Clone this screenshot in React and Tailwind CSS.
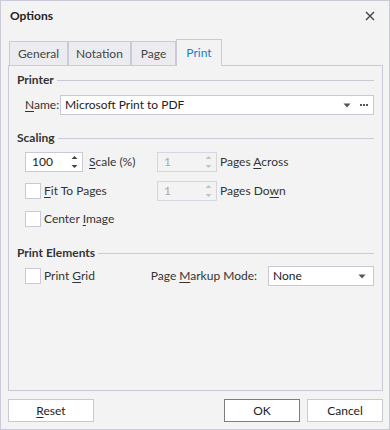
import React from "react";

function SpinArrows({ color }) {
  return (
    <svg width="7" height="14" viewBox="0 0 7 14" className="shrink-0">
      <path d="M0.5 4 L3.5 1 L6.5 4 Z" fill={color} />
      <path d="M0.5 10 L3.5 13 L6.5 10 Z" fill={color} />
    </svg>
  );
}

function Spin({ value, disabled, className }) {
  return (
    <div
      className={
        "h-[20px] flex items-center justify-between pl-[6px] pr-[4px] border " +
        (disabled
          ? "border-[#d6d6e0] bg-[#f3f3f3] text-[#a9a9a9] "
          : "border-[#c9c9d8] bg-white text-[#222] ") +
        className
      }
    >
      <span>{value}</span>
      <SpinArrows color={disabled ? "#c4c4c4" : "#444"} />
    </div>
  );
}

function Check() {
  return <div className="w-[16px] h-[16px] border border-[#c9c9d8] bg-white shrink-0" />;
}

function DownTri() {
  return (
    <svg width="8" height="5" viewBox="0 0 8 5" className="shrink-0">
      <path d="M0.5 0.5 L7.5 0.5 L4 4.5 Z" fill="#555" />
    </svg>
  );
}

function Dots() {
  return (
    <svg width="8" height="2" viewBox="0 0 8 2" className="shrink-0 ml-[9px]">
      <rect x="0" y="0" width="2" height="2" fill="#555" />
      <rect x="3" y="0" width="2" height="2" fill="#555" />
      <rect x="6" y="0" width="2" height="2" fill="#555" />
    </svg>
  );
}

function Header({ children, className = "" }) {
  return (
    <div className={"h-[16px] flex items-center pl-[8px] pr-[8px] " + className}>
      <span className="font-bold text-[#333]">{children}</span>
      <div className="flex-1 h-px bg-[#c9c9d8] ml-[3px]" />
    </div>
  );
}

export default function App() {
  return (
    <div className="w-[390px] h-[430px] bg-[#f3f3f3] border border-[#cacad8] flex flex-col font-['Lato','Liberation_Sans',sans-serif] text-[12px] leading-[16px] text-[#333]">
      {/* title bar */}
      <div className="h-[29px] shrink-0 flex items-center justify-between pl-[9px] pr-[14px]">
        <span className="font-bold text-[#222]">Options</span>
        <svg width="10" height="10" viewBox="0 0 10 10">
          <path d="M1 1 L9 9 M9 1 L1 9" stroke="#444" strokeWidth="1.4" />
        </svg>
      </div>

      {/* tabs */}
      <div className="mt-[9px] ml-[8px] h-[27px] -mb-px relative z-10 flex items-end">
        <div className="w-[59px] h-[25px] border border-[#c9c9d8] bg-[#ececf0] flex items-center justify-center text-[#444]">
          General
        </div>
        <div className="w-[63px] h-[25px] border border-[#c9c9d8] bg-[#ececf0] flex items-center justify-center text-[#444]">
          Notation
        </div>
        <div className="w-[45px] h-[25px] border border-[#c9c9d8] bg-[#ececf0] flex items-center justify-center text-[#444]">
          Page
        </div>
        <div className="w-[46px] h-[27px] border border-b-0 border-[#c9c9d8] bg-[#f3f3f3] flex items-center justify-center pb-[1px] text-[#1f7ad6]">
          Print
        </div>
      </div>

      {/* panel */}
      <div className="ml-[7px] w-[375px] h-[326px] shrink-0 border border-[#c9c9d8] bg-[#f3f3f3] flex flex-col">
        <Header className="mt-[6px]">Printer</Header>
        <div className="mt-[7px] h-[20px] flex items-center pl-[16px] pr-[8px]">
          <span className="w-[35px] shrink-0">
            <u className="underline-offset-2">N</u>ame:
          </span>
          <div className="flex-1 h-[20px] border border-[#c9c9d8] bg-white flex items-center pl-[4px] pr-[5px] text-[#222]">
            <span className="flex-1">Microsoft Print to PDF</span>
            <DownTri />
            <Dots />
          </div>
        </div>

        <Header className="mt-[15px]">Scaling</Header>
        <div className="mt-[6px] h-[20px] flex items-center pl-[16px]">
          <Spin value="100" className="w-[58px]" />
          <span className="ml-[6px]">
            <u className="underline-offset-2">S</u>cale (%)
          </span>
          <Spin value="1" disabled className="ml-auto w-[60px]" />
          <span className="ml-[3px] w-[162px]">
            Pages <u className="underline-offset-2">A</u>cross
          </span>
        </div>
        <div className="mt-[9px] h-[20px] flex items-center pl-[16px]">
          <Check />
          <span className="ml-[3px]">
            <u className="underline-offset-2">F</u>it To Pages
          </span>
          <Spin value="1" disabled className="ml-auto w-[60px]" />
          <span className="ml-[3px] w-[162px]">
            Pages Do<u className="underline-offset-2">w</u>n
          </span>
        </div>
        <div className="mt-[8px] h-[20px] flex items-center pl-[16px]">
          <Check />
          <span className="ml-[3px]">
            Center <u className="underline-offset-2">I</u>mage
          </span>
        </div>

        <Header className="mt-[16px]">Print Elements</Header>
        <div className="mt-[5px] h-[20px] flex items-center pl-[16px] pr-[8px]">
          <Check />
          <span className="ml-[3px]">
            Print <u className="underline-offset-2">G</u>rid
          </span>
          <span className="ml-auto">
            Page <u className="underline-offset-2">M</u>arkup Mode:
          </span>
          <div className="ml-[11px] w-[106px] h-[20px] border border-[#c9c9d8] bg-white flex items-center pl-[4px] pr-[7px] text-[#222]">
            <span className="flex-1">None</span>
            <DownTri />
          </div>
        </div>
      </div>

      {/* buttons */}
      <div className="mt-[8px] ml-[7px] w-[375px] flex items-center">
        <button className="w-[86px] h-[23px] border border-[#c9c9d8] bg-white text-[#222]">
          <u className="underline-offset-2">R</u>eset
        </button>
        <button className="ml-auto w-[76px] h-[23px] border border-[#7d7d7d] bg-white text-[#222]">
          OK
        </button>
        <button className="ml-[7px] w-[76px] h-[23px] border border-[#c9c9d8] bg-white text-[#222]">
          Cancel
        </button>
      </div>
    </div>
  );
}
